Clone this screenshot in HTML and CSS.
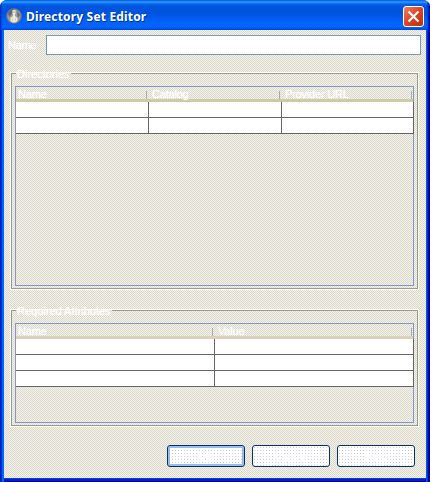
FILE: index.html
```html
<!DOCTYPE html>
<html lang="en">
<head>
<meta charset="utf-8">
<title>Directory Set Editor</title>
<link rel="stylesheet" href="styles.css">
</head>
<body>
<div class="window">
  <header class="titlebar">
    <svg class="app-icon" width="16" height="16" viewBox="0 0 16 16">
      <circle cx="8" cy="8" r="7.8" fill="#777788"/>
      <circle cx="8" cy="8" r="6.6" fill="#9c9ca6"/>
      <path d="M2 5Q4 1 8 1L6 6 3 9zM11 3l3 4-2 3z" fill="#666677"/>
      <path d="M6.5 2h3v4H9v2l2.5 2v3l-2 1.500h-3l-2-1.500v-3L7 8V6h-.5z" fill="#eeeecc"/>
      <path d="M7 3h2v2H7zM6 10h1v3H6zM9 10h1v3H9z" fill="#cccccc"/>
    </svg>
    <h1 class="title">Directory Set Editor</h1>
    <button class="close" aria-label="Close">
      <svg width="19" height="19" viewBox="0 0 19 19"><path d="M4.500 4.500l10 10M14.500 4.500l-10 10" stroke="#fff" stroke-width="2.200"/></svg>
    </button>
  </header>
  <main class="content">
    <div class="name-row"><label class="name-label" for="name">Name</label><input class="name-input" id="name"></div>
    <section class="group directories">
      <h2 class="legend">Directories</h2>
      <div class="table-box">
        <div class="row head"><span class="cell">Name</span><span class="cell">Catalog</span><span class="cell">Provider URL</span></div>
        <div class="row"><span class="cell"></span><span class="cell"></span><span class="cell"></span></div>
        <div class="row"><span class="cell"></span><span class="cell"></span><span class="cell"></span></div>
      </div>
    </section>
    <section class="group attributes">
      <h2 class="legend">Required Attributes</h2>
      <div class="table-box">
        <div class="row head"><span class="cell">Name</span><span class="cell">Value</span></div>
        <div class="row"><span class="cell"></span><span class="cell"></span></div>
        <div class="row"><span class="cell"></span><span class="cell"></span></div>
        <div class="row"><span class="cell"></span><span class="cell"></span></div>
      </div>
    </section>
    <div class="buttons"><button class="btn default">OK</button><button class="btn">Cancel</button><button class="btn">Help</button></div>
  </main>
</div>
</body>
</html>
```
FILE: styles.css
```css
* { box-sizing: border-box; }
:root {
  --dither: repeating-conic-gradient(#f5f3e8 0 25%, #dad8cf 0 50%) 0 0 / 2px 2px fixed;
}
body { margin: 0; background: #fff; font: 11px "Liberation Sans", sans-serif; color: #fff; }
.window {
  width: 430px; height: 482px; display: flex; flex-direction: column;
  padding: 0 4px 4px; border-radius: 7px 7px 0 0; overflow: hidden;
  background:
    linear-gradient(90deg, #0022bb 0 1px, #0033cc 1px 2px, #0066ff 2px 4px, transparent 4px 426px, #0055ee 426px 427px, #0033cc 427px 428px, #000099 428px) 0 30px / 430px 452px no-repeat,
    linear-gradient(#0044ee 0 479px, #0022bb 479px 481px, #000099 481px);
}
.titlebar {
  height: 30px; flex: none; margin: 0 -4px; padding: 0 6px; display: flex; align-items: center;
  background:
    linear-gradient(90deg, #0033cc 0 1px, transparent 2px 427px, #0033cc 428px, #000099 430px),
    linear-gradient(#0055dd 0, #3399ff 2px, #0066ee 4px, #0055dd 6px, #0052dd 13px, #0060f5 20px, #0066ff 27px, #0044dd 30px);
}
.app-icon { margin-top: 2px; }
.title {
  flex: 1; margin: 4px 0 0 4px; font: bold 12px/16px "Noto Sans", sans-serif;
  letter-spacing: .17px; white-space: nowrap; text-shadow: 1px 1px #003399;
}
.close {
  width: 21px; height: 21px; margin: 3px 0 0; padding: 0; border: 1px solid #fff; border-radius: 3px;
  background: linear-gradient(135deg, #f08060, #dd4422 50%, #bb3300);
}
.close svg { display: block; }
.content { flex: 1; display: flex; flex-direction: column; padding: 5px 5px 0 7px; background: var(--dither); }
.name-row { display: flex; height: 20px; flex: none; }
.name-label { width: 35px; line-height: 21px; margin-left: -3px; margin-right: 3px; letter-spacing: -.3px; text-shadow: 0 0 1px #fff; }
.name-input { flex: 1; min-width: 0; border: 1px solid #7799bb; padding: 0 3px; background: #fff; }
.group { border: 1px solid #999999; outline: 1px solid #fffff0; padding: 0 3px 2px; margin-right: 3px; display: flex; flex-direction: column; }
.directories { height: 216px; margin-top: 18px; }
.attributes { height: 116px; margin-top: 21px; }
.legend {
  align-self: flex-start; height: 12px; margin: -6px 0 6px 1px; padding: 0 1px;
  font: 11px/12px "Liberation Sans", sans-serif; background: var(--dither); text-shadow: 0 0 1px #fff;
}
.table-box { flex: 1; border: 1px solid #7f99cc; }
.row { display: grid; grid-template-columns: 133px 133px 132px; height: 16px; }
.attributes .row { grid-template-columns: 199px 199px; }
.cell { background: #fff; border: solid #666; border-width: 0 1px 1px 0; }
.head { height: 15px; border-bottom: 3px solid #cccca8; }
.attributes .head { border-bottom-color: #ddd0bb; }
.head .cell {
  border: 0; background: linear-gradient(#aaa, #aaa) right 2px top 4px / 1px 8px no-repeat;
  padding-left: 2px; line-height: 14px; height: 15px; letter-spacing: -.2px; text-shadow: 0 0 1px #fff;
}
.head .cell + .cell { padding-left: 3px; }
.buttons { display: flex; justify-content: flex-end; gap: 7px; margin: 19px 6px 0 0; }
.btn {
  width: 78px; height: 22px; padding: 0; border: 1px solid #003366; border-radius: 3px;
  color: #fff; font: 11px "Liberation Sans", sans-serif; text-shadow: 0 0 1px #fff, 0 0 1px #fff;
  background: radial-gradient(circle at 1.5px 1.5px, #ccccdd 0 .7px, transparent .8px) 0 0 / 3px 3px, #fff;
}
.default { box-shadow: inset 0 0 0 2px #99bbee; }
```
